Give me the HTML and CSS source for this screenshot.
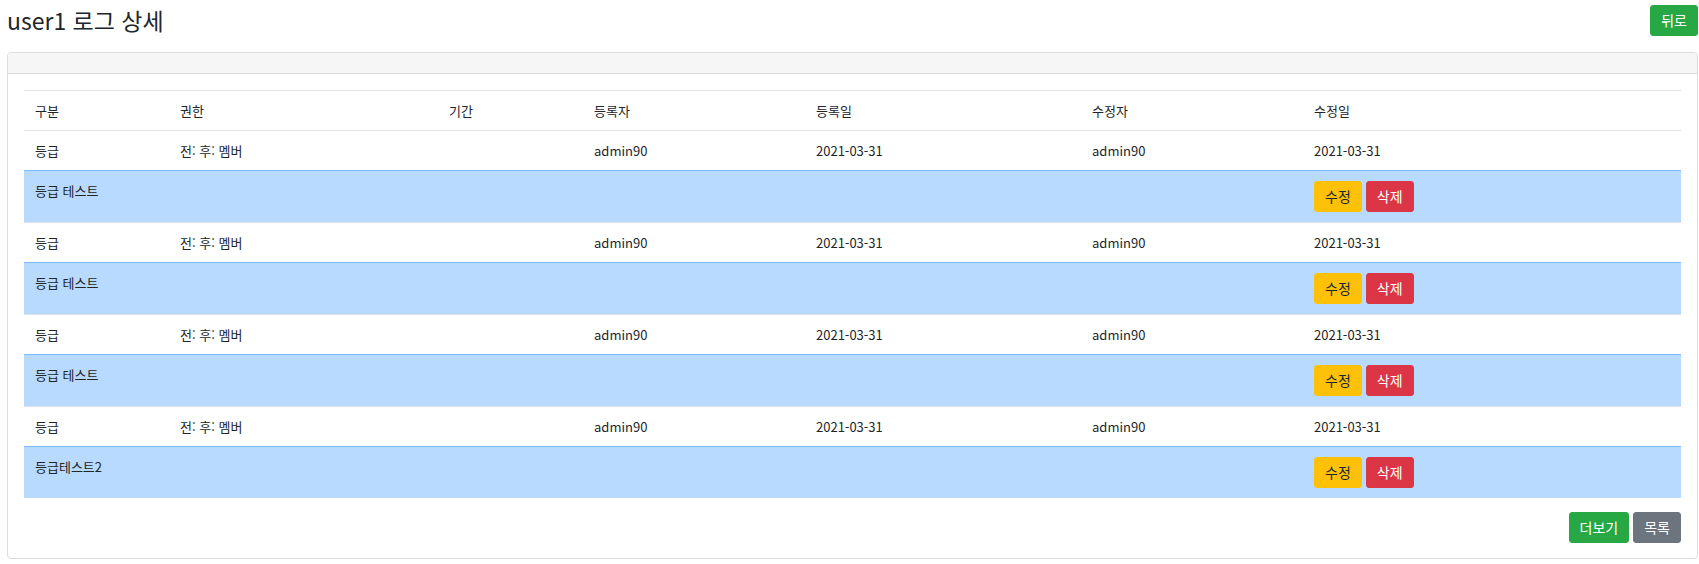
FILE: index.html
```html
<!DOCTYPE html>
<html lang="ko">
<head>
<meta charset="utf-8">
<title>user1 로그 상세</title>
<link rel="stylesheet" href="styles.css">
</head>
<body>
<div class="page">
  <div class="title-row">
    <h4 class="title">user1 로그 상세</h4>
    <button class="btn btn-success">뒤로</button>
  </div>
  <div class="card">
    <div class="card-header"></div>
    <div class="card-body">
      <table class="log-table">
        <colgroup>
          <col class="c1"><col class="c2"><col class="c3"><col class="c4"><col class="c5"><col class="c6"><col class="c7">
        </colgroup>
        <thead>
          <tr><th>구분</th><th>권한</th><th>기간</th><th>등록자</th><th>등록일</th><th>수정자</th><th>수정일</th></tr>
        </thead>
        <tbody>
          <tr><td>등급</td><td>전: 후: 멤버</td><td></td><td>admin90</td><td>2021-03-31</td><td>admin90</td><td>2021-03-31</td></tr>
          <tr class="primary"><td colspan="6">등급 테스트</td><td class="actions"><button class="btn btn-warning">수정</button><button class="btn btn-danger">삭제</button></td></tr>
          <tr><td>등급</td><td>전: 후: 멤버</td><td></td><td>admin90</td><td>2021-03-31</td><td>admin90</td><td>2021-03-31</td></tr>
          <tr class="primary"><td colspan="6">등급 테스트</td><td class="actions"><button class="btn btn-warning">수정</button><button class="btn btn-danger">삭제</button></td></tr>
          <tr><td>등급</td><td>전: 후: 멤버</td><td></td><td>admin90</td><td>2021-03-31</td><td>admin90</td><td>2021-03-31</td></tr>
          <tr class="primary"><td colspan="6">등급 테스트</td><td class="actions"><button class="btn btn-warning">수정</button><button class="btn btn-danger">삭제</button></td></tr>
          <tr><td>등급</td><td>전: 후: 멤버</td><td></td><td>admin90</td><td>2021-03-31</td><td>admin90</td><td>2021-03-31</td></tr>
          <tr class="primary"><td colspan="6">등급테스트2</td><td class="actions"><button class="btn btn-warning">수정</button><button class="btn btn-danger">삭제</button></td></tr>
        </tbody>
      </table>
      <div class="footer-actions">
        <button class="btn btn-success">더보기</button>
        <button class="btn btn-secondary">목록</button>
      </div>
    </div>
  </div>
</div>
</body>
</html>
```

FILE: styles.css
```css
* { box-sizing: border-box; }
html, body {
  margin: 0;
  padding: 0;
  background: #fff;
}
body {
  font-family: "Noto Sans CJK KR", "Noto Sans", "Liberation Sans", sans-serif;
  color: #212529;
  font-size: 13px;
  line-height: 19px;
}
.page {
  padding: 5px 1px 0 7px;
}
.title-row {
  display: flex;
  justify-content: space-between;
  align-items: center;
  height: 31px;
}
.title {
  margin: 0;
  font-size: 23px;
  font-weight: 400;
  line-height: 31px;
}
.btn {
  display: inline-block;
  font-family: inherit;
  font-size: 14px;
  line-height: 19px;
  padding: 5px 10px;
  border: 1px solid transparent;
  border-radius: 3px;
  cursor: pointer;
  color: #fff;
  margin: 0;
}
.btn-success { background: #28a745; border-color: #28a745; }
.btn-danger { background: #dc3545; border-color: #dc3545; }
.btn-warning { background: #ffc107; border-color: #ffc107; color: #212529; }
.btn-secondary { background: #6c757d; border-color: #6c757d; }

.card {
  margin-top: 16px;
  border: 1px solid #dcdcdc;
  border-radius: 4px;
  overflow: hidden;
}
.card-header {
  height: 21px;
  background: #f6f6f6;
  border-bottom: 1px solid #dcdcdc;
}
.card-body {
  padding: 16px 16px 15px;
}
.log-table {
  width: 100%;
  border-collapse: collapse;
  table-layout: fixed;
}
.c1 { width: 145px; }
.c2 { width: 269px; }
.c3 { width: 145px; }
.c4 { width: 222px; }
.c5 { width: 276px; }
.c6 { width: 222px; }
.log-table th,
.log-table td {
  text-align: left;
  font-weight: 400;
  padding: 10px 11px;
  border-top: 1px solid #dee2e6;
  vertical-align: top;
  white-space: nowrap;
}
.log-table thead th {
  border-bottom: 1px solid #dee2e6;
}
.log-table tr.primary td {
  background: #b8daff;
  border-top-color: #7abaff;
}
.actions .btn + .btn {
  margin-left: 4px;
}
.footer-actions {
  display: flex;
  justify-content: flex-end;
  gap: 4px;
  margin-top: 14px;
}
```
